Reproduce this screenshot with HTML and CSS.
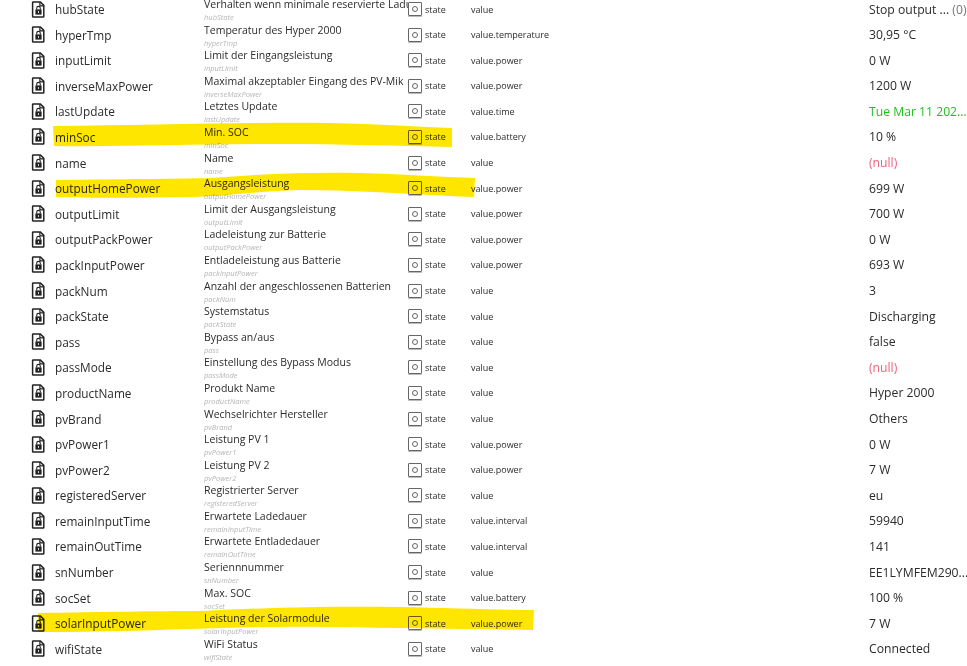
FILE: index.html
```html
<!DOCTYPE html>
<html lang="de">
<head>
<meta charset="utf-8">
<title>Objects</title>
<link rel="stylesheet" href="styles.css">
</head>
<body>
<svg class="defs" width="0" height="0" aria-hidden="true">
  <symbol id="file" viewBox="0.5 0 16 17">
    <path d="M2.7 1h7.2l3.4 3.4v11.1a.6.6 0 0 1-.6.6H2.7a.6.6 0 0 1-.6-.6V1.6a.6.6 0 0 1 .6-.6z" fill="#fff" stroke="#222" stroke-width="1.5"/>
    <path d="M9.4 1v3.8h3.9" fill="none" stroke="#222" stroke-width="1.2"/>
    <rect x="4.9" y="8.4" width="6.2" height="5.2" fill="#222"/>
    <path d="M6.2 8.5V7.2a1.8 1.8 0 0 1 3.6 0v1.3" fill="none" stroke="#222" stroke-width="1.1"/>
    <rect x="7.5" y="10.2" width="1" height="1.6" fill="#fff"/>
  </symbol>
</svg>
<main class="list">
  <div class="row"><svg class="ico"><use href="#file"/></svg><span class="name">hubState</span><div class="desc"><span class="title">Verhalten wenn minimale reservierte Ladu</span><span class="sub">hubState</span></div><span class="box"></span><span class="type">state</span><span class="role">value</span><span class="val">Stop output ... <i class="num">(0)</i></span></div>
  <div class="row"><svg class="ico"><use href="#file"/></svg><span class="name">hyperTmp</span><div class="desc"><span class="title">Temperatur des Hyper 2000</span><span class="sub">hyperTmp</span></div><span class="box"></span><span class="type">state</span><span class="role">value.temperature</span><span class="val">30,95 °C</span></div>
  <div class="row"><svg class="ico"><use href="#file"/></svg><span class="name">inputLimit</span><div class="desc"><span class="title">Limit der Eingangsleistung</span><span class="sub">inputLimit</span></div><span class="box"></span><span class="type">state</span><span class="role">value.power</span><span class="val">0 W</span></div>
  <div class="row"><svg class="ico"><use href="#file"/></svg><span class="name">inverseMaxPower</span><div class="desc"><span class="title">Maximal akzeptabler Eingang des PV-Mik</span><span class="sub">inverseMaxPower</span></div><span class="box"></span><span class="type">state</span><span class="role">value.power</span><span class="val">1200 W</span></div>
  <div class="row"><svg class="ico"><use href="#file"/></svg><span class="name">lastUpdate</span><div class="desc"><span class="title">Letztes Update</span><span class="sub">lastUpdate</span></div><span class="box"></span><span class="type">state</span><span class="role">value.time</span><span class="val date">Tue Mar 11 202...</span></div>
  <div class="row"><svg class="ico"><use href="#file"/></svg><span class="name">minSoc</span><div class="desc"><span class="title">Min. SOC</span><span class="sub">minSoc</span></div><span class="box"></span><span class="type">state</span><span class="role">value.battery</span><span class="val">10 %</span></div>
  <div class="row"><svg class="ico"><use href="#file"/></svg><span class="name">name</span><div class="desc"><span class="title">Name</span><span class="sub">name</span></div><span class="box"></span><span class="type">state</span><span class="role">value</span><span class="val null">(null)</span></div>
  <div class="row"><svg class="ico"><use href="#file"/></svg><span class="name">outputHomePower</span><div class="desc"><span class="title">Ausgangsleistung</span><span class="sub">outputHomePower</span></div><span class="box"></span><span class="type">state</span><span class="role">value.power</span><span class="val">699 W</span></div>
  <div class="row"><svg class="ico"><use href="#file"/></svg><span class="name">outputLimit</span><div class="desc"><span class="title">Limit der Ausgangsleistung</span><span class="sub">outputLimit</span></div><span class="box"></span><span class="type">state</span><span class="role">value.power</span><span class="val">700 W</span></div>
  <div class="row"><svg class="ico"><use href="#file"/></svg><span class="name">outputPackPower</span><div class="desc"><span class="title">Ladeleistung zur Batterie</span><span class="sub">outputPackPower</span></div><span class="box"></span><span class="type">state</span><span class="role">value.power</span><span class="val">0 W</span></div>
  <div class="row"><svg class="ico"><use href="#file"/></svg><span class="name">packInputPower</span><div class="desc"><span class="title">Entladeleistung aus Batterie</span><span class="sub">packInputPower</span></div><span class="box"></span><span class="type">state</span><span class="role">value.power</span><span class="val">693 W</span></div>
  <div class="row"><svg class="ico"><use href="#file"/></svg><span class="name">packNum</span><div class="desc"><span class="title">Anzahl der angeschlossenen Batterien</span><span class="sub">packNum</span></div><span class="box"></span><span class="type">state</span><span class="role">value</span><span class="val">3</span></div>
  <div class="row"><svg class="ico"><use href="#file"/></svg><span class="name">packState</span><div class="desc"><span class="title">Systemstatus</span><span class="sub">packState</span></div><span class="box"></span><span class="type">state</span><span class="role">value</span><span class="val">Discharging</span></div>
  <div class="row"><svg class="ico"><use href="#file"/></svg><span class="name">pass</span><div class="desc"><span class="title">Bypass an/aus</span><span class="sub">pass</span></div><span class="box"></span><span class="type">state</span><span class="role">value</span><span class="val">false</span></div>
  <div class="row"><svg class="ico"><use href="#file"/></svg><span class="name">passMode</span><div class="desc"><span class="title">Einstellung des Bypass Modus</span><span class="sub">passMode</span></div><span class="box"></span><span class="type">state</span><span class="role">value</span><span class="val null">(null)</span></div>
  <div class="row"><svg class="ico"><use href="#file"/></svg><span class="name">productName</span><div class="desc"><span class="title">Produkt Name</span><span class="sub">productName</span></div><span class="box"></span><span class="type">state</span><span class="role">value</span><span class="val">Hyper 2000</span></div>
  <div class="row"><svg class="ico"><use href="#file"/></svg><span class="name">pvBrand</span><div class="desc"><span class="title">Wechselrichter Hersteller</span><span class="sub">pvBrand</span></div><span class="box"></span><span class="type">state</span><span class="role">value</span><span class="val">Others</span></div>
  <div class="row"><svg class="ico"><use href="#file"/></svg><span class="name">pvPower1</span><div class="desc"><span class="title">Leistung PV 1</span><span class="sub">pvPower1</span></div><span class="box"></span><span class="type">state</span><span class="role">value.power</span><span class="val">0 W</span></div>
  <div class="row"><svg class="ico"><use href="#file"/></svg><span class="name">pvPower2</span><div class="desc"><span class="title">Leistung PV 2</span><span class="sub">pvPower2</span></div><span class="box"></span><span class="type">state</span><span class="role">value.power</span><span class="val">7 W</span></div>
  <div class="row"><svg class="ico"><use href="#file"/></svg><span class="name">registeredServer</span><div class="desc"><span class="title">Registrierter Server</span><span class="sub">registeredServer</span></div><span class="box"></span><span class="type">state</span><span class="role">value</span><span class="val">eu</span></div>
  <div class="row"><svg class="ico"><use href="#file"/></svg><span class="name">remainInputTime</span><div class="desc"><span class="title">Erwartete Ladedauer</span><span class="sub">remainInputTime</span></div><span class="box"></span><span class="type">state</span><span class="role">value.interval</span><span class="val">59940</span></div>
  <div class="row"><svg class="ico"><use href="#file"/></svg><span class="name">remainOutTime</span><div class="desc"><span class="title">Erwartete Entladedauer</span><span class="sub">remainOutTime</span></div><span class="box"></span><span class="type">state</span><span class="role">value.interval</span><span class="val">141</span></div>
  <div class="row"><svg class="ico"><use href="#file"/></svg><span class="name">snNumber</span><div class="desc"><span class="title">Seriennnummer</span><span class="sub">snNumber</span></div><span class="box"></span><span class="type">state</span><span class="role">value</span><span class="val">EE1LYMFEM290...</span></div>
  <div class="row"><svg class="ico"><use href="#file"/></svg><span class="name">socSet</span><div class="desc"><span class="title">Max. SOC</span><span class="sub">socSet</span></div><span class="box"></span><span class="type">state</span><span class="role">value.battery</span><span class="val">100 %</span></div>
  <div class="row"><svg class="ico"><use href="#file"/></svg><span class="name">solarInputPower</span><div class="desc"><span class="title">Leistung der Solarmodule</span><span class="sub">solarInputPower</span></div><span class="box"></span><span class="type">state</span><span class="role">value.power</span><span class="val">7 W</span></div>
  <div class="row"><svg class="ico"><use href="#file"/></svg><span class="name">wifiState</span><div class="desc"><span class="title">WiFi Status</span><span class="sub">wifiState</span></div><span class="box"></span><span class="type">state</span><span class="role">value</span><span class="val">Connected</span></div>
</main>
<svg class="marker" width="967" height="666" viewBox="0 0 967 666" aria-hidden="true">
  <path d="M53 126 C150 125 250 122 330 123 C380 124 420 127 452 128 L452 147 C400 146 340 144 280 144 C200 144 120 147 54 146 Z"/>
  <path d="M56 180 C130 179 170 179 210 178 C260 174 310 172 360 173 C400 174 440 177 475 178 L474 197 C420 195 360 190 300 190 C260 191 230 196 190 197 C140 198 90 198 56 197 Z"/>
  <path d="M38 613 C100 612 160 611 200 611 C280 607 340 606 400 607 C450 608 500 610 534 610 L533 630 C470 629 400 628 330 627 C250 625 150 632 38 632 Z"/>
</svg>
</body>
</html>
```
FILE: styles.css
```css
html, body {
  margin: 0;
  height: 100%;
  overflow: hidden;
  background: #fff;
}
body {
  position: relative;
  font-family: "Open Sans", "Noto Sans", sans-serif;
  color: #2b2b2b;
}
.defs {
  position: absolute;
}
.list {
  margin-top: -3.8px;
  padding-left: 31px;
}
.row {
  display: grid;
  grid-template-columns: 24px 149px 204px 17px 46px 398px 98px;
  grid-template-rows: 25.6px;
  align-items: center;
  height: 25.6px;
  white-space: nowrap;
}
.ico {
  width: 16px;
  height: 17px;
}
.name {
  font-size: 11.8px;
}
.desc {
  display: flex;
  flex-direction: column;
  overflow: hidden;
  height: 27px;
  margin-top: 3px;
}
.title {
  font-size: 10.5px;
  line-height: 14px;
}
.sub {
  font-size: 7.5px;
  line-height: 13px;
  font-style: italic;
  color: #b5b5b5;
}
.box {
  width: 12px;
  height: 12px;
  border: 1px solid #666;
  border-radius: 1px;
  box-shadow: 0 1px 0 #bbb;
  display: flex;
  align-items: center;
  justify-content: center;
}
.box::after {
  content: "";
  width: 4px;
  height: 4px;
  border: 1px solid #666;
  border-radius: 50%;
}
.type, .role {
  font-size: 9px;
}
.val {
  font-size: 12.2px;
}
.val i {
  font-style: normal;
  color: #777;
}
.date {
  color: #1ec01e;
}
.null {
  color: #f0607c;
}
.marker {
  position: absolute;
  left: 0;
  top: 0;
  mix-blend-mode: multiply;
  fill: #ffe600;
  pointer-events: none;
}
```
